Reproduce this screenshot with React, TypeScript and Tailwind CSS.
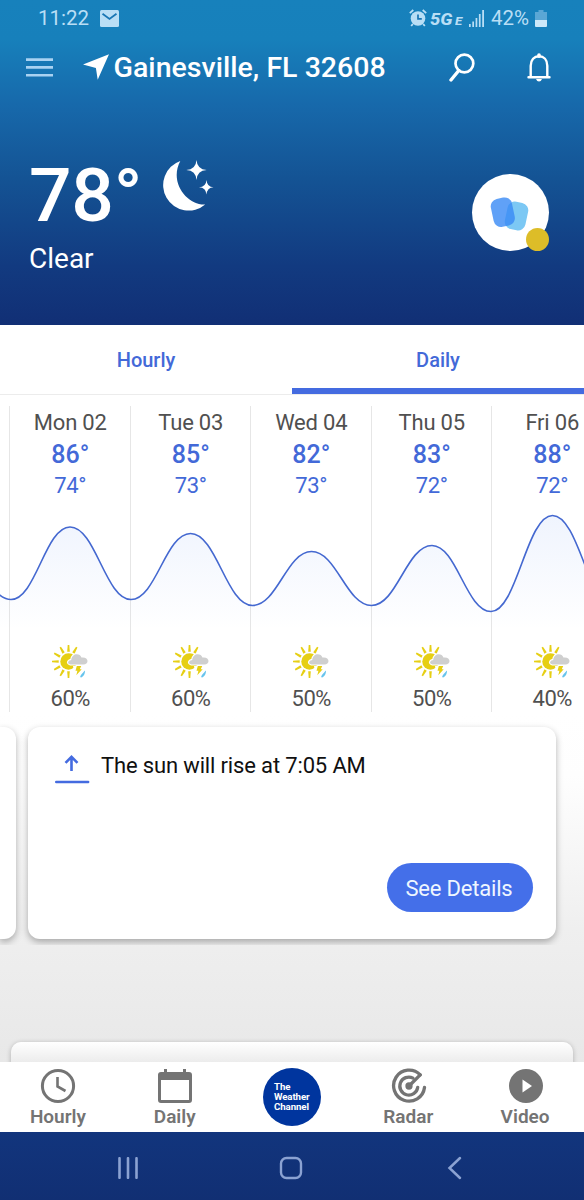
import React from 'react';

interface Day {
  label: string;
  high: number;
  low: number;
  rain: number;
}

const days: Day[] = [
  { label: 'Mon 02', high: 86, low: 74, rain: 60 },
  { label: 'Tue 03', high: 85, low: 73, rain: 60 },
  { label: 'Wed 04', high: 82, low: 73, rain: 50 },
  { label: 'Thu 05', high: 83, low: 72, rain: 50 },
  { label: 'Fri 06', high: 88, low: 72, rain: 40 },
];

// highs and lows of the temperature wave, in chart pixels
const points: [number, number][] = [
  [-50, 26],
  [11, 89.5],
  [70, 17],
  [131, 89.5],
  [190.5, 23.5],
  [252.5, 95.5],
  [311.5, 41.5],
  [371.5, 95.5],
  [432, 35.5],
  [491, 101.5],
  [552.5, 5.5],
  [616, 101],
];

const wave = points
  .map(([x, y], i) => {
    if (i === 0) return `M${x} ${y}`;
    const [px, py] = points[i - 1];
    const d = (x - px) * 0.42;
    return `C${px + d} ${py} ${x - d} ${y} ${x} ${y}`;
  })
  .join(' ');

function StatusBar() {
  return (
    <div className="flex h-9 items-center pl-[38px] pr-[37px] text-[#b9def5]">
      <span className="text-[20.5px]">11:22</span>
      <svg className="ml-[11px]" width="19" height="17" viewBox="0 0 19 17">
        <rect width="19" height="17" rx="1.5" fill="currentColor" />
        <path d="M2.5 3.8 9.5 9l7-5.2" fill="none" stroke="#1976b4" strokeWidth="1.8" />
      </svg>
      <svg className="ml-auto" width="18" height="18" viewBox="0 0 18 18">
        <circle cx="9" cy="9.5" r="7.3" fill="currentColor" />
        <path d="M9 5.5v4.3h3.8" fill="none" stroke="#1976b4" strokeWidth="1.7" />
        <path d="M.8 4.2 4.3 1M17.2 4.2 13.7 1M3.8 15l-1.6 2M14.2 15l1.6 2" stroke="currentColor" strokeWidth="1.8" />
      </svg>
      <span className="ml-[3px] flex w-[36px] items-baseline pt-[3px] text-[16px] font-extrabold italic leading-none">
        <span className="inline-block w-[25px] origin-left scale-x-[1.15]">5G</span>
        <span className="inline-block origin-left scale-x-[1.2] text-[11px]">E</span>
      </span>
      <svg className="ml-[3px]" width="16" height="17" viewBox="0 0 16 17" fill="currentColor">
        <path d="M0 14h1.7v3H0zM3.3 11.5H5V17H3.3zM6.6 8h1.7v9H6.6zM9.9 4h1.7v13H9.9zM13.2 0h1.8v17h-1.8z" />
      </svg>
      <span className="ml-[6px] w-[40px] whitespace-nowrap text-[20.5px]">42%</span>
      <svg className="ml-[4px]" width="12" height="17" viewBox="0 0 12 17">
        <path d="M3.5 0h5v2H12v9H0V2h3.5z" fill="#5ba7d5" />
        <path d="M0 10h12v6q0 1-1 1H1q-1 0-1-1z" fill="#cce8f9" />
      </svg>
    </div>
  );
}

function TitleBar() {
  return (
    <div className="flex h-[62px] items-center pl-[26px] pr-[33px] text-white">
      <svg width="27" height="20" viewBox="0 0 27 20" className="mt-[2px]">
        <path d="M0 1.6h27M0 9.4h27M0 17.2h27" stroke="#a9d2f2" strokeWidth="2.6" />
      </svg>
      <svg className="ml-[30px]" width="26" height="27" viewBox="0 0 26 27">
        <path d="M26 .3 14.7 25.8 12.9 13.9 0 10.4Z" fill="white" />
      </svg>
      <h1 className="ml-[4.5px] whitespace-nowrap pt-[2px] text-[28.5px] font-medium tracking-[0.03px]">Gainesville, FL 32608</h1>
      <svg className="ml-auto mt-px" width="26" height="29" viewBox="0 0 26 29" fill="none" stroke="white">
        <circle cx="15.4" cy="10.5" r="8.9" strokeWidth="2.7" />
        <path d="M9.8 17.5 2 27" strokeWidth="3.4" strokeLinecap="round" />
      </svg>
      <svg className="ml-[52px] mt-px" width="24" height="29" viewBox="0 0 24 29" fill="none" stroke="white">
        <path d="M1.5 24.2h21M3.7 24V12.8c0-6 3.5-9.5 8.3-9.5s8.3 3.5 8.3 9.5V24" strokeWidth="2.4" strokeLinecap="round" />
        <path d="M12 3.2V2" strokeWidth="3.6" strokeLinecap="round" />
        <path d="M9 26h6q-1 2.6-3 2.6T9 26z" fill="white" stroke="none" />
      </svg>
    </div>
  );
}

function MoonIcon() {
  return (
    <svg width="52" height="53" viewBox="0 0 52 53" fill="white">
      <path d="M18.3 1A25.5 25.5 0 1 0 43.2 44.5C26 45.5 6.5 23 18.3 1Z" />
      <path d="M34.5 0q.6 9.4 10.2 10-9.6.6-10.2 10-.6-9.4-10.2-10 9.6-.6 10.2-10zM44.5 20q.5 7 7 7.3-6.5.4-7 7.3-.5-7-7.5-7.3 7-.4 7.5-7.3z" />
    </svg>
  );
}

function StormIcon() {
  const cloud = 'M21 19.5q-3.5 0-4-2 .2-2.2 3.2-2.6c.5-3.6 3-5.6 5.5-5.6 2.3 0 3.9 1.2 4.7 3.2 3.7-.5 6.1 1 6.1 3.6 0 2.2-1.7 3.4-4 3.4z';
  return (
    <svg width="38" height="34" viewBox="0 0 38 34">
      <circle cx="17.5" cy="16.5" r="8.2" fill="#e6cf14" />
      {[0, 30, 60, 90, 120, 150, 180, 210].map((deg) => (
        <path key={deg} d="M16.2 26.3h2.6l-.5 6.7h-1.6z" fill="#e6cf14" transform={`rotate(${deg} 17.5 16.5)`} />
      ))}
      <path d={cloud} fill="white" stroke="white" strokeWidth="2.2" />
      <path d="M22 21h14v12H24z" fill="white" />
      <path d={cloud} fill="#cfcfcf" />
      <path d="M25.8 21h4.4l-1.4 3.3h1.9l-5.4 6 1.1-4.5h-1.9z" fill="#e6cf14" />
      <path d="M34 25.4c.1 3.2-1.4 6.4-4.2 7-1.9-.8 1.5-4.2 4.2-7z" fill="#67c4ec" />
    </svg>
  );
}

function Header() {
  return (
    <header className="h-[325px] bg-[linear-gradient(#1781bc_0%,#1780bb_12%,#1769ab_32%,#145394_55%,#123a80_82%,#112f75_100%)]">
      <StatusBar />
      <TitleBar />
      <div className="flex justify-between pl-[29px] pr-[35px] pt-[50px] text-white">
        <div>
          <div className="flex items-start">
            <span className="w-[113px] whitespace-nowrap pt-[10px] text-[75px] font-medium leading-[75px] tracking-[-0.3px]">78°</span>
            <div className="ml-[20px] pt-[12px]">
              <MoonIcon />
            </div>
          </div>
          <p className="mt-[10px] text-[28px] leading-8">Clear</p>
        </div>
        <div className="relative mt-[26px] size-[77px] rounded-full bg-white">
          <svg className="absolute left-[18px] top-[22px]" width="40" height="38" viewBox="0 0 40 38">
            <rect x="16" y="6" width="21" height="28" rx="7.5" fill="#7cc8f4" transform="rotate(12 26.5 20)" />
            <rect x="2" y="2" width="21.5" height="28.5" rx="7.5" fill="#3889f5" fillOpacity=".8" transform="rotate(-12 12.5 16)" />
          </svg>
          <span className="absolute bottom-0 right-0 size-[23px] rounded-full bg-[#ddbd28]" />
        </div>
      </div>
    </header>
  );
}

function Tabs() {
  return (
    <div className="flex h-[70px] border-b border-[#ececec] text-[20px] font-medium text-[#4369d8]">
      <button className="flex-1 pt-px">Hourly</button>
      <button className="flex-1 border-b-[6px] border-[#446be0] pt-[7px]">Daily</button>
    </div>
  );
}

function Forecast() {
  return (
    <section className="relative h-[317px] overflow-hidden pt-[11px]">
      <div className="ml-[9px] flex w-[603px]">
        {days.map((day) => (
          <div key={day.label} className="flex h-[306px] w-[120.5px] shrink-0 flex-col items-center border-l border-[#e6e6e6] pl-px text-[22px] text-[#4369d8]">
            <span className="mt-[2px] leading-[30px] tracking-[-0.2px] text-[#505050]">{day.label}</span>
            <span className="pt-px text-[25px] font-medium leading-8">{day.high}°</span>
            <span className="leading-[30px] tracking-[-0.3px]">{day.low}°</span>
            <div className="mt-[144px]">
              <StormIcon />
            </div>
            <span className="mt-[3px] leading-[34px] tracking-[-0.5px] text-[#505050]">{day.rain}%</span>
          </div>
        ))}
      </div>
      {/* temperature wave runs across all the columns */}
      <svg className="absolute left-0 top-[115px]" width="584" height="120" viewBox="0 0 584 120">
        <defs>
          <linearGradient id="wave" x1="0" y1="0" x2="0" y2="120" gradientUnits="userSpaceOnUse">
            <stop offset="0" stopColor="#4a7ff0" stopOpacity=".09" />
            <stop offset="1" stopColor="#4a7ff0" stopOpacity="0" />
          </linearGradient>
        </defs>
        <path d={`${wave} V120 H-50 Z`} fill="url(#wave)" />
        <path d={wave} fill="none" stroke="#4468d0" strokeWidth="1.6" />
      </svg>
    </section>
  );
}

function Cards() {
  return (
    <section className="h-[350px] overflow-hidden bg-[linear-gradient(#ffffff_0%,#fefefe_18%,#efefef_62%,#e8e8e8_100%)]">
      <div className="flex h-[233px] gap-3 overflow-hidden pt-[15px]">
        <div className="h-[212px] w-4 shrink-0 rounded-r-[12px] bg-white shadow-[0_3px_7px_rgba(0,0,0,0.3)]" />
        <div className="flex h-[212px] w-[528px] shrink-0 flex-col justify-between rounded-[12px] bg-white pb-[27px] pl-[27px] pr-[23px] pt-[22px] shadow-[0_3px_7px_rgba(0,0,0,0.3)]">
          <div className="flex items-start">
            <svg width="35" height="35" viewBox="0 0 35 35" fill="none" stroke="#446be0">
              <path d="M16.5 22V8M10.5 13.8l6-6 6 6" strokeWidth="2.6" />
              <path d="M1.2 33h32" strokeWidth="2.4" strokeLinecap="round" />
            </svg>
            <span className="ml-[11px] pt-px text-[22px] leading-8 tracking-[-0.15px] text-[#101010]">The sun will rise at 7:05 AM</span>
          </div>
          <button className="h-[49px] w-[146px] self-end rounded-full bg-[#446fe9] pr-0.5 pt-px text-[22px] tracking-[-0.2px] text-[#eef6ff]">See Details</button>
        </div>
      </div>
      <div className="mx-[11px] mt-[97px] h-10 rounded-t-[10px] bg-[linear-gradient(#ffffff,#ececec_20px)] shadow-[0_1px_5px_rgba(0,0,0,0.25)]" />
    </section>
  );
}

function NavItem({ label, children }: { label: string; children: React.ReactNode }) {
  return (
    <div className="flex flex-1 flex-col items-center pt-[6px] text-[#747474]">
      {children}
      <span className="mt-[2px] pr-px text-[19px] font-semibold leading-[22px]">{label}</span>
    </div>
  );
}

function BottomNav() {
  return (
    <nav className="flex h-[70px] bg-white">
      <NavItem label="Hourly">
        <svg width="36" height="36" viewBox="0 0 36 36" fill="none" stroke="currentColor" strokeWidth="3">
          <circle cx="18" cy="18" r="15.6" />
          <path d="M17.5 9v9.5l8 4.5" strokeWidth="2.6" />
        </svg>
      </NavItem>
      <NavItem label="Daily">
        <svg width="36" height="36" viewBox="0 0 36 36" fill="currentColor">
          <path fillRule="evenodd" d="M7 1h3v3h16V1h3v3h3q3 0 3 3v25q0 3-3 3H4q-3 0-3-3V7q0-3 3-3h3zM4 12v20h28V12z" />
        </svg>
      </NavItem>
      <div className="flex flex-1 justify-center pt-[6px]">
        <div className="flex size-[58px] flex-col justify-center rounded-full bg-[#00359e] pl-[11px] text-[9.7px] font-bold leading-[10px] tracking-[-0.1px] text-white">
          <span>The</span>
          <span>Weather</span>
          <span>Channel</span>
        </div>
      </div>
      <NavItem label="Radar">
        <svg width="36" height="36" viewBox="0 0 36 36" fill="none" stroke="currentColor" strokeWidth="3.3" strokeLinecap="round">
          <path d="M29.2 6.8A15.5 15.5 0 1 0 33.5 19.5" />
          <path d="M22 10.1A9 9 0 1 0 26.7 19.5" />
          <path d="M18 18 29.2 6.8" />
          <circle cx="18" cy="18" r="2" fill="currentColor" />
        </svg>
      </NavItem>
      <NavItem label="Video">
        <svg width="36" height="36" viewBox="0 0 36 36">
          <circle cx="18" cy="18" r="17" fill="currentColor" />
          <path d="M14.5 11.5v13L24 18z" fill="white" />
        </svg>
      </NavItem>
    </nav>
  );
}

function SystemBar() {
  return (
    <div className="flex h-[68px] items-center bg-[linear-gradient(#12357d,#112f73)] pl-[117px] pt-1">
      <svg width="22" height="22" viewBox="0 0 22 22">
        <path d="M2.5 1.2v19.6M11 1.2v19.6M19.5 1.2v19.6" stroke="#8ba2d2" strokeWidth="2.6" strokeLinecap="round" />
      </svg>
      <svg className="ml-[140px]" width="24" height="24" viewBox="0 0 24 24">
        <rect x="2" y="2" width="20" height="20" rx="5.5" fill="none" stroke="#8ba2d2" strokeWidth="2.4" />
      </svg>
      <svg className="ml-[144px]" width="15" height="24" viewBox="0 0 15 24">
        <path d="M13 2 2.5 12 13 22" fill="none" stroke="#8ba2d2" strokeWidth="2.5" strokeLinecap="round" />
      </svg>
    </div>
  );
}

export default function App() {
  return (
    <div className="h-[1200px] w-[584px] overflow-hidden bg-white font-[Roboto,sans-serif]">
      <Header />
      <Tabs />
      <Forecast />
      <Cards />
      <BottomNav />
      <SystemBar />
    </div>
  );
}
